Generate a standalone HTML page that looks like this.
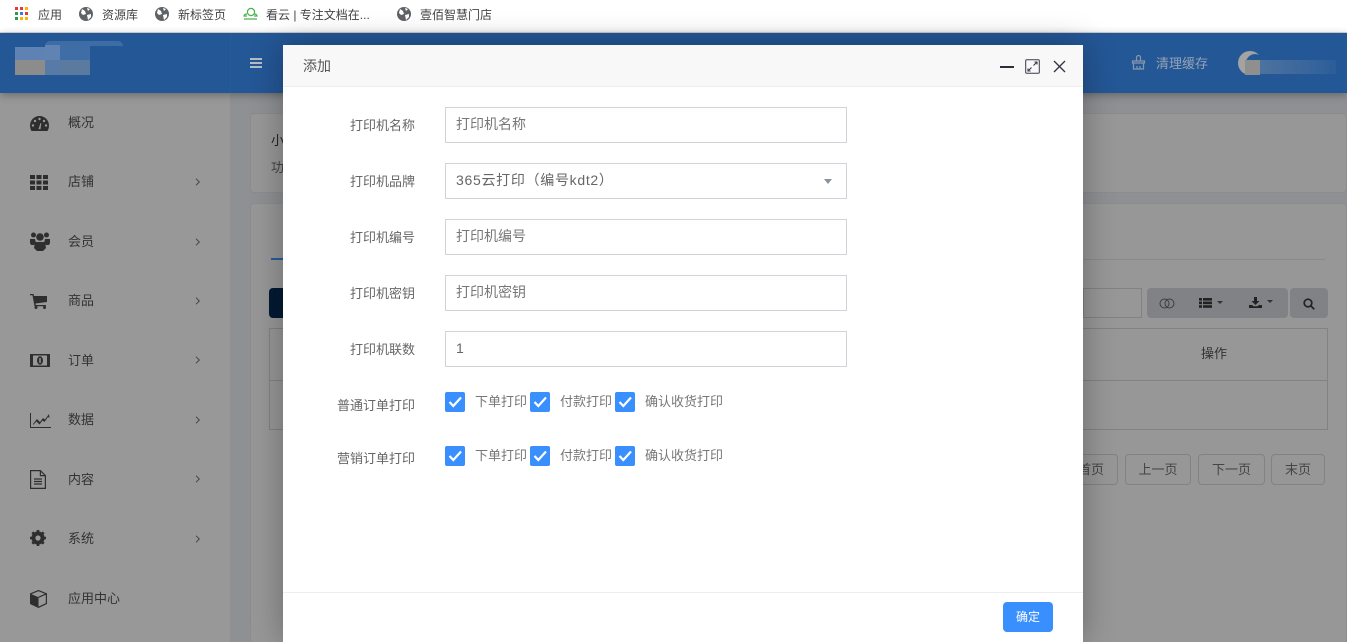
<!DOCTYPE html>
<html lang="zh"><head><meta charset="utf-8"><title>添加</title>
<style>
*{box-sizing:border-box}
html,body{margin:0;padding:0;width:1347px;height:642px;overflow:hidden;background:#8e9093;font-family:"Liberation Sans","Noto Sans CJK SC",sans-serif}
#root{position:absolute;left:0;top:0;width:1347px;height:642px;overflow:hidden;background:#8e9093}
.a{position:absolute}
.t{position:absolute;white-space:nowrap;line-height:20px}
.bk{font-size:12px;color:#444;top:5px}
#bar{left:0;top:0;width:1347px;height:33px;background:#fff;border-bottom:1px solid #d8d8d8}
#head{left:0;top:33px;width:1347px;height:60px;background:#245796;box-shadow:0 2px 8px rgba(0,0,0,.3);z-index:2}
#side{left:0;top:93px;width:230px;height:549px;background:#989898}
.m{font-size:13px;color:#333;left:68px}
.ar{position:absolute;left:195px}
.ic{position:absolute;left:30px}
.card{position:absolute;background:#979797;border:1px solid #8c8c8c;border-radius:4px}
#modal{left:283px;top:45px;width:800px;height:597px;background:#fff;z-index:5;box-shadow:0 0 30px rgba(0,0,0,.3)}
#mh{left:0;top:0;width:800px;height:42px;background:#f8f8f8;border-bottom:1px solid #eee}
.lb{position:absolute;font-size:13px;color:#666;width:132px;text-align:right;left:0;line-height:20px;white-space:nowrap}
.in{position:absolute;left:162px;width:402px;height:36px;border:1px solid #ced4da;background:#fff;font-size:14px;color:#777;padding-left:10px;line-height:32px;white-space:nowrap}
.cb{position:absolute;width:20px;height:20px;background:#3a8ffe;border-radius:2px}
.cb svg{display:block}
.cl{position:absolute;font-size:13px;color:#777;line-height:20px;white-space:nowrap}
.pg{position:absolute;top:454px;height:31px;border:1px solid #828282;border-radius:4px;font-size:13px;color:#444;text-align:center;line-height:29px}
</style></head><body>
<div id="root">

<div class="a" id="bar">
<svg class="a" style="left:15px;top:7px" width="14" height="14" viewBox="0 0 14 14"><rect x="0" y="0" width="3" height="3" fill="#e53935"/><rect x="5" y="0" width="3" height="3" fill="#e53935"/><rect x="10" y="0" width="3" height="3" fill="#fbb300"/><rect x="0" y="5" width="3" height="3" fill="#2a9d4a"/><rect x="5" y="5" width="3" height="3" fill="#3b78e7"/><rect x="10" y="5" width="3" height="3" fill="#e53935"/><rect x="0" y="10" width="3" height="3" fill="#2a9d4a"/><rect x="5" y="10" width="3" height="3" fill="#fbb300"/><rect x="10" y="10" width="3" height="3" fill="#fbb300"/></svg>
<div class="t bk" style="left:38px">应用</div>
<svg class="a" style="left:79px;top:7px" width="14" height="14" viewBox="0 0 14 14"><circle cx="7" cy="7" r="7" fill="#5f6368"/><path d="M3 2l3 2 1 3-3 1-2-2zM8 8l4-1 0 3-3 3zM8 1l3 1-2 2z" fill="#fff"/></svg>
<div class="t bk" style="left:102px">资源库</div>
<svg class="a" style="left:155px;top:7px" width="14" height="14" viewBox="0 0 14 14"><circle cx="7" cy="7" r="7" fill="#5f6368"/><path d="M3 2l3 2 1 3-3 1-2-2zM8 8l4-1 0 3-3 3zM8 1l3 1-2 2z" fill="#fff"/></svg>
<div class="t bk" style="left:178px">新标签页</div>
<svg class="a" style="left:243px;top:7px" width="15" height="14" viewBox="0 0 15 14" fill="none" stroke="#4caf50" stroke-width="1.2"><circle cx="8" cy="5" r="3.6"/><path d="M4 7c-2 0-3 1-3 2h3M1 12h13M11 7c2 0 3 1 3 2h-3"/></svg>
<div class="t bk" style="left:266px">看云 | 专注文档在...</div>
<svg class="a" style="left:397px;top:7px" width="14" height="14" viewBox="0 0 14 14"><circle cx="7" cy="7" r="7" fill="#5f6368"/><path d="M3 2l3 2 1 3-3 1-2-2zM8 8l4-1 0 3-3 3zM8 1l3 1-2 2z" fill="#fff"/></svg>
<div class="t bk" style="left:420px">壹佰智慧门店</div>
</div>

<div class="a" id="head">
<div class="a" style="left:230px;top:0;width:1px;height:60px;background:#285b9b"></div>
<div class="a" style="left:45px;top:8px;width:78px;height:5px;background:#3e6da5;border-radius:6px 6px 0 0"></div>
<div class="a" style="left:15px;top:14px;width:30px;height:13px;background:#5d82b3"></div>
<div class="a" style="left:45px;top:12px;width:15px;height:15px;background:#5f83b2"></div>
<div class="a" style="left:60px;top:12px;width:30px;height:15px;background:#3f6da6"></div>
<div class="a" style="left:15px;top:27px;width:30px;height:15px;background:#8c8c8c"></div>
<div class="a" style="left:45px;top:27px;width:15px;height:15px;background:#587aa6"></div>
<div class="a" style="left:60px;top:27px;width:30px;height:15px;background:#5a7aa0"></div>
<div class="a" style="left:250px;top:25px;width:12px;height:2px;background:#b4bcc6;box-shadow:0 4px 0 #b4bcc6,0 8px 0 #b4bcc6"></div>
<svg class="a" style="left:1131px;top:22px" width="15" height="16" viewBox="0 0 15 16" fill="none" stroke="#8797ac" stroke-width="1.2"><path d="M5.500 6V2.500a2 2 0 0 1 4 0V6M1.500 6h12v2h-12zM2.500 8v6h10V8M6 11v3M9 11v3"/></svg>
<div class="t" style="left:1156px;top:21px;font-size:13px;color:#95a3b5">清理缓存</div>
<div class="a" style="left:1238px;top:18px;width:24px;height:24px;border-radius:50%;background:#a3a3a3"></div>
<div class="a" style="left:1245px;top:21px;width:20px;height:24px;border-radius:50%;background:#245796"></div>
<div class="a" style="left:1245px;top:27px;width:15px;height:15px;background:#8f8f8f"></div>
<div class="a" style="left:1260px;top:27px;width:76px;height:14px;background:linear-gradient(90deg,#4d729f,#3a669c 60%,#2c5d9a)"></div>
</div>

<div class="a" id="side">
<svg class="ic" style="top:23px" width="19" height="15" viewBox="0 0 19 15"><path d="M9.500 0a9.500 9.500 0 0 0-9.500 9.500c0 2 .6 4 1.500 5.500h16c.9-1.500 1.500-3.500 1.500-5.500A9.500 9.500 0 0 0 9.500 0z" fill="#2e2e2e"/><g fill="#989898"><circle cx="9.500" cy="3" r="1.200"/><circle cx="5" cy="5" r="1.200"/><circle cx="14" cy="5" r="1.200"/><circle cx="3" cy="9.500" r="1.200"/><circle cx="16" cy="9.500" r="1.200"/><path d="M8.500 13l2-6 .8.300-.8 6z"/></g></svg>
<div class="t m" style="top:20px">概况</div>

<svg class="ic" style="top:82px" width="18" height="15" viewBox="0 0 18 15" fill="#2e2e2e"><rect width="5" height="4"/><rect x="6.500" width="5" height="4"/><rect x="13" width="5" height="4"/><rect y="5.500" width="5" height="4"/><rect x="6.500" y="5.500" width="5" height="4"/><rect x="13" y="5.500" width="5" height="4"/><rect y="11" width="5" height="4"/><rect x="6.500" y="11" width="5" height="4"/><rect x="13" y="11" width="5" height="4"/></svg>
<div class="t m" style="top:79px">店铺</div>
<svg class="ar" style="top:85px" width="6" height="8" viewBox="0 0 6 8" fill="none" stroke="#444"><path d="M1 .7l3.300 3.300L1 7.300"/></svg>

<svg class="ic" style="top:139px" width="20" height="19" viewBox="0 0 20 19" fill="#2e2e2e"><circle cx="3.500" cy="3" r="2.500"/><circle cx="16.500" cy="3" r="2.500"/><circle cx="10" cy="5" r="3.800"/><path d="M0 7h5l1 4-2 2H1l-1-2zM15 7h5v4l-1 2h-3l-2-2zM5 10h10l1 6-3 3H7l-3-3z"/></svg>
<div class="t m" style="top:139px">会员</div>
<svg class="ar" style="top:145px" width="6" height="8" viewBox="0 0 6 8" fill="none" stroke="#444"><path d="M1 .7l3.300 3.300L1 7.300"/></svg>

<svg class="ic" style="top:201px" width="18" height="15" viewBox="0 0 18 15" fill="#2e2e2e"><path d="M0 0h3.500l.6 2H17v6L5.500 9.500l.3 1.500H16v1.200H4.500L2.500 1.300H0z"/><circle cx="6" cy="13.500" r="1.500"/><circle cx="14.500" cy="13.500" r="1.500"/></svg>
<div class="t m" style="top:198px">商品</div>
<svg class="ar" style="top:204px" width="6" height="8" viewBox="0 0 6 8" fill="none" stroke="#444"><path d="M1 .7l3.300 3.300L1 7.300"/></svg>

<svg class="ic" style="top:261px" width="20" height="13" viewBox="0 0 20 13"><rect width="20" height="13" fill="#2e2e2e"/><rect x="3" y="1.500" width="14" height="10" fill="#989898"/><ellipse cx="10" cy="6.500" rx="3" ry="4.200" fill="#2e2e2e"/><rect x="9.300" y="4" width="1.400" height="5" fill="#989898"/></svg>
<div class="t m" style="top:258px">订单</div>
<svg class="ar" style="top:263px" width="6" height="8" viewBox="0 0 6 8" fill="none" stroke="#444"><path d="M1 .7l3.300 3.300L1 7.300"/></svg>

<svg class="ic" style="top:320px" width="21" height="15" viewBox="0 0 21 15"><path d="M.5 0v14.500H21" fill="none" stroke="#2e2e2e"/><path d="M3 11l4-5 3 3 3-4 2 1.500L19 1l.5 4-1.500-1-3.500 5-2-1.500-3 4-3-3-3.500 3.500z" fill="#2e2e2e"/></svg>
<div class="t m" style="top:317px">数据</div>
<svg class="ar" style="top:323px" width="6" height="8" viewBox="0 0 6 8" fill="none" stroke="#444"><path d="M1 .7l3.300 3.300L1 7.300"/></svg>

<svg class="ic" style="top:377px" width="16" height="19" viewBox="0 0 16 19" fill="none" stroke="#2e2e2e" stroke-width="1.200"><path d="M.6.600h9.800l5 5v12.800H.6zM10.400.6v5h5M4 9h8M4 11.500h8M4 14h8"/></svg>
<div class="t m" style="top:377px">内容</div>
<svg class="ar" style="top:382px" width="6" height="8" viewBox="0 0 6 8" fill="none" stroke="#444"><path d="M1 .7l3.300 3.300L1 7.300"/></svg>

<svg class="ic" style="top:437px" width="16" height="16" viewBox="0 0 16 16"><circle cx="8" cy="8" r="4.600" fill="none" stroke="#2e2e2e" stroke-width="4"/><g stroke="#2e2e2e" stroke-width="2.600"><path d="M8 0v3M8 13v3M0 8h3M13 8h3M2.300 2.300l2 2M11.700 11.700l2 2M13.700 2.300l-2 2M4.300 11.700l-2 2"/></g></svg>
<div class="t m" style="top:436px">系统</div>
<svg class="ar" style="top:442px" width="6" height="8" viewBox="0 0 6 8" fill="none" stroke="#444"><path d="M1 .7l3.300 3.300L1 7.300"/></svg>

<svg class="ic" style="top:497px" width="17" height="18" viewBox="0 0 17 18"><path d="M8.500.6L16.400 3.800v9.800L8.500 17.300.6 13.600V3.800z" fill="none" stroke="#2e2e2e" stroke-width="1.200"/><path d="M.6 3.800l7.900 3.500v10L.6 13.600z" fill="#2e2e2e"/><path d="M8.500 7.300l7.900-3.500" stroke="#2e2e2e" stroke-width="1.200"/></svg>
<div class="t m" style="top:496px">应用中心</div>
</div>

<div class="card" style="left:250px;top:113px;width:1097px;height:80px"></div>
<div class="t" style="left:271px;top:131px;font-size:13px;color:#222">小</div>
<div class="t" style="left:271px;top:158px;font-size:13px;color:#444">功</div>
<div class="card" style="left:250px;top:203px;width:1097px;height:439px;border-bottom:0;border-radius:4px 4px 0 0"></div>
<div class="a" style="left:271px;top:259px;width:1054px;height:1px;background:#8a8a8a"></div>
<div class="a" style="left:271px;top:258px;width:20px;height:2px;background:#265b9e"></div>
<div class="a" style="left:269px;top:288px;width:30px;height:30px;background:#031a33;border-radius:4px"></div>
<div class="a" style="left:269px;top:328px;width:1059px;height:102px;border:1px solid #828282"></div>
<div class="a" style="left:269px;top:380px;width:1059px;height:1px;background:#828282"></div>
<div class="a" style="left:1083px;top:288px;width:59px;height:30px;border:1px solid #828282"></div>
<div class="a" style="left:1147px;top:288px;width:141px;height:30px;background:#808285;border-radius:4px"></div>
<div class="a" style="left:1290px;top:288px;width:38px;height:30px;background:#808285;border-radius:4px"></div>
<svg class="a" style="left:1159px;top:298px" width="16" height="11" viewBox="0 0 16 11" fill="none" stroke="#3d3d3d"><circle cx="5.500" cy="5.500" r="4.500"/><circle cx="10.500" cy="5.500" r="4.500"/></svg>
<svg class="a" style="left:1199px;top:298px" width="13" height="10" viewBox="0 0 13 10" fill="#222"><rect width="3" height="2.600"/><rect x="4" width="9" height="2.600"/><rect y="3.600" width="3" height="2.600"/><rect x="4" y="3.600" width="9" height="2.600"/><rect y="7.200" width="3" height="2.600"/><rect x="4" y="7.200" width="9" height="2.600"/></svg>
<div class="a" style="left:1217px;top:301px;border:3.500px solid transparent;border-top:3.500px solid #333;border-bottom:0"></div>
<svg class="a" style="left:1249px;top:297px" width="13" height="11" viewBox="0 0 13 11" fill="#222"><path d="M5 0h3v4h2.500L6.500 8 2.500 4H5zM0 8h3l1.500 1.300h4L10 8h3v3H0z"/></svg>
<div class="a" style="left:1267px;top:300px;border:3.500px solid transparent;border-top:3.500px solid #333;border-bottom:0"></div>
<svg class="a" style="left:1303px;top:298px" width="12" height="12" viewBox="0 0 12 12" fill="none" stroke="#222" stroke-width="1.700"><circle cx="5" cy="5" r="3.800"/><path d="M8 8l3.300 3.300"/></svg>
<div class="t" style="left:1201px;top:344px;font-size:13px;color:#333">操作</div>
<div class="pg" style="left:1064px;width:54px">首页</div>
<div class="pg" style="left:1125px;width:66px">上一页</div>
<div class="pg" style="left:1198px;width:67px">下一页</div>
<div class="pg" style="left:1271px;width:54px">末页</div>

<div class="a" id="modal">
<div class="a" id="mh"></div>
<div class="t" style="left:20px;top:11px;font-size:14px;color:#555">添加</div>
<div class="a" style="left:717px;top:21px;width:14px;height:2px;background:#2e2e3a"></div>
<svg class="a" style="left:742px;top:14px" width="15" height="15" viewBox="0 0 15 15" fill="none" stroke="#3a3a46"><rect x=".7" y=".7" width="13.600" height="13.600" rx="1"/><path d="M8.500 6.500L12 3M9.500 3H12v2.500M6.500 8.500L3 12M3 9.500V12h2.500" stroke-width="1.100"/></svg>
<svg class="a" style="left:770px;top:15px" width="13" height="13" viewBox="0 0 13 13" fill="none" stroke="#33333f" stroke-width="1.300"><path d="M1 1l11 11M12 1L1 12"/></svg>

<div class="lb" style="top:71px">打印机名称</div>
<div class="in" style="top:62px">打印机名称</div>
<div class="lb" style="top:127px">打印机品牌</div>
<div class="in" style="top:118px;color:#666;letter-spacing:.7px">365云打印（编号kdt2）</div>
<div class="a" style="left:541px;top:134px;border:4px solid transparent;border-top:5px solid #8a939b;border-bottom:0"></div>
<div class="lb" style="top:183px">打印机编号</div>
<div class="in" style="top:174px">打印机编号</div>
<div class="lb" style="top:239px">打印机密钥</div>
<div class="in" style="top:230px">打印机密钥</div>
<div class="lb" style="top:295px">打印机联数</div>
<div class="in" style="top:286px;color:#666">1</div>

<div class="lb" style="top:351px">普通订单打印</div>
<div class="cb" style="left:162px;top:347px"><svg width="20" height="20" viewBox="0 0 20 20" fill="none" stroke="#fff" stroke-width="2.200"><path d="M4.500 10l3.800 4L16 5.500"/></svg></div>
<div class="cl" style="left:192px;top:347px">下单打印</div>
<div class="cb" style="left:247px;top:347px"><svg width="20" height="20" viewBox="0 0 20 20" fill="none" stroke="#fff" stroke-width="2.200"><path d="M4.500 10l3.800 4L16 5.500"/></svg></div>
<div class="cl" style="left:277px;top:347px">付款打印</div>
<div class="cb" style="left:332px;top:347px"><svg width="20" height="20" viewBox="0 0 20 20" fill="none" stroke="#fff" stroke-width="2.200"><path d="M4.500 10l3.800 4L16 5.500"/></svg></div>
<div class="cl" style="left:362px;top:347px">确认收货打印</div>

<div class="lb" style="top:404px">营销订单打印</div>
<div class="cb" style="left:162px;top:401px"><svg width="20" height="20" viewBox="0 0 20 20" fill="none" stroke="#fff" stroke-width="2.200"><path d="M4.500 10l3.800 4L16 5.500"/></svg></div>
<div class="cl" style="left:192px;top:401px">下单打印</div>
<div class="cb" style="left:247px;top:401px"><svg width="20" height="20" viewBox="0 0 20 20" fill="none" stroke="#fff" stroke-width="2.200"><path d="M4.500 10l3.800 4L16 5.500"/></svg></div>
<div class="cl" style="left:277px;top:401px">付款打印</div>
<div class="cb" style="left:332px;top:401px"><svg width="20" height="20" viewBox="0 0 20 20" fill="none" stroke="#fff" stroke-width="2.200"><path d="M4.500 10l3.800 4L16 5.500"/></svg></div>
<div class="cl" style="left:362px;top:401px">确认收货打印</div>

<div class="a" style="left:0;top:547px;width:800px;height:1px;background:#eee"></div>
<div class="a" style="left:720px;top:557px;width:50px;height:30px;background:#3a8ffe;border-radius:4px;color:#fff;font-size:12px;text-align:center;line-height:30px">确定</div>
</div>
</div>
</body></html>
